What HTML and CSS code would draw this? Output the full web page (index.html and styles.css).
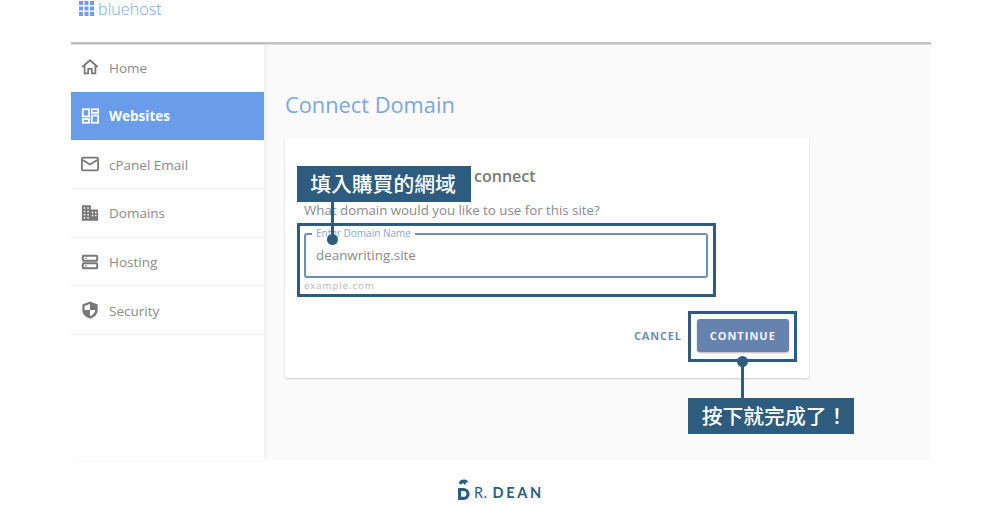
FILE: index.html
```html
<!DOCTYPE html>
<html lang="zh-Hant">
<head>
<meta charset="utf-8">
<title>Connect Domain</title>
<link rel="stylesheet" href="styles.css">
</head>
<body>
<div class="frame">
  <header class="topbar">
    <svg class="logo-grid" width="15" height="15" viewBox="0 0 15 15"><g fill="#6a9fe8"><rect x="0" y="0" width="4" height="4"/><rect x="5.500" y="0" width="4" height="4"/><rect x="11" y="0" width="4" height="4"/><rect x="0" y="5.500" width="4" height="4"/><rect x="5.500" y="5.500" width="4" height="4"/><rect x="11" y="5.500" width="4" height="4"/><rect x="0" y="11" width="4" height="4"/><rect x="5.500" y="11" width="4" height="4"/><rect x="11" y="11" width="4" height="4"/></g></svg>
    <span class="logo-text">bluehost</span>
  </header>
  <div class="shell">
    <nav class="sidebar">
      <div class="nav-item">
        <svg class="nav-icon" viewBox="0 0 20 20" fill="none" stroke="#777" stroke-width="1.900"><path d="M1.500 10 10 2.500l8.500 7.500M4 8.500V17h4v-5h4v5h4V8.500"/></svg>
        <span>Home</span>
      </div>
      <div class="nav-item active">
        <svg class="nav-icon" viewBox="0 0 20 20" fill="none" stroke="#fff" stroke-width="2"><rect x="2" y="2.500" width="7" height="8"/><rect x="12" y="2.500" width="7" height="4"/><rect x="2" y="13.500" width="7" height="4"/><rect x="12" y="9.500" width="7" height="8"/></svg>
        <span>Websites</span>
      </div>
      <div class="nav-item">
        <svg class="nav-icon" viewBox="0 0 20 20" fill="none" stroke="#777" stroke-width="2"><rect x="1" y="3" width="18" height="14" rx="1.500"/><path d="m2 5.500 8 5 8-5"/></svg>
        <span>cPanel Email</span>
      </div>
      <div class="nav-item">
        <svg class="nav-icon" viewBox="0 0 20 20"><path fill="#777" d="M1 1.500h10V6h8v12.500H1z"/><path fill="#fff" d="M3 3.500h1.700v1.700H3zM7 3.500h1.700v1.700H7zM3 7.500h1.700v1.700H3zM7 7.500h1.700v1.700H7zM3 11h1.700v1.700H3zM7 11h1.700v1.700H7zM3 14.500h1.700v1.700H3zM7 14.500h1.700v1.700H7zM12 8.500h1.700v1.700H12zM15.500 8.500h1.700v1.700h-1.700zM12 12h1.700v1.700H12zM15.500 12h1.700v1.700h-1.700z"/></svg>
        <span>Domains</span>
      </div>
      <div class="nav-item">
        <svg class="nav-icon" viewBox="0 0 20 20" fill="none" stroke="#777" stroke-width="2.200"><rect x="2" y="3" width="16" height="5.500" rx="1"/><rect x="2" y="11.500" width="16" height="5.500" rx="1"/><path stroke-width="1.200" d="M4.500 5.800h2M4.500 14.300h2"/></svg>
        <span>Hosting</span>
      </div>
      <div class="nav-item">
        <svg class="nav-icon" viewBox="0 0 20 20"><path fill="#777" d="M10 .5 1.500 4V10c0 4.700 3.600 8.300 8.500 9.500 4.900-1.200 8.500-4.800 8.500-9.500V4z"/><path fill="#fff" d="M10 3.200 4 5.500V10h6zM10 10v6.800c3.100-1.100 5.400-3.600 5.900-6.800z"/></svg>
        <span>Security</span>
      </div>
    </nav>
    <main class="content">
      <h1 class="page-title">Connect Domain</h1>
      <section class="card">
        <h2 class="card-heading">connect</h2>
        <p class="card-sub">What domain would you like to use for this site?</p>
        <div class="highlight field-highlight">
          <div class="field">
            <span class="field-label">Enter Domain Name</span>
            <span class="field-value">deanwriting.site</span>
          </div>
          <div class="field-hint">example.com</div>
        </div>
        <div class="actions">
          <span class="cancel">CANCEL</span>
          <div class="highlight button-highlight"><span class="continue">CONTINUE</span></div>
        </div>
      </section>
    </main>
  </div>
  <div class="callout callout-field">填入購買的網域</div>
  <div class="stem stem-field"></div>
  <div class="dot dot-field"></div>
  <div class="stem stem-button"></div>
  <div class="dot dot-button"></div>
  <div class="callout callout-button">按下就完成了！</div>
</div>
<footer class="brand">
  <svg class="brand-mark" width="13" height="21" viewBox="0 0 13 21"><path fill="#2d5c7f" d="M1 4.500C1 1.500 4 0 7 .5c2 .4 3 1.500 3.500 3L8.500 3 7 6 5 4 3 5.500z"/><path fill="none" stroke="#2d5c7f" stroke-width="3.200" d="M1.600 10.500h4a4.400 4.400 0 0 1 0 8.800h-4z"/></svg>
  <span class="brand-text"><span class="brand-r">R.</span><span class="brand-name">DEAN</span></span>
</footer>
</body>
</html>
```
FILE: styles.css
```css
* { box-sizing: border-box; }
html, body { margin: 0; padding: 0; }
body {
  width: 1000px;
  height: 521px;
  overflow: hidden;
  background: #fff;
  font-family: "Open Sans", "Noto Sans", sans-serif;
  color: #777;
}
.frame {
  position: relative;
  width: 860px;
  height: 460px;
  margin-left: 71px;
  display: flex;
  flex-direction: column;
}
.topbar {
  height: 43px;
  flex: none;
  display: flex;
  align-items: flex-start;
  gap: 4px;
  padding: 1px 0 0 8px;
  position: relative;
  z-index: 1;
}
.topbar::after {
  content: "";
  position: absolute;
  left: 0;
  right: 0;
  top: 42px;
  height: 3px;
  background: linear-gradient(#c9c9c9, #bdbdbd 50%, #ececec);
}
.logo-grid { flex: none; }
.logo-text {
  font-size: 16.200px;
  line-height: 16px;
  color: #7ba9e8;
  font-weight: 300;
}
.shell { flex: 1; display: flex; min-height: 0; }
.sidebar {
  width: 193px;
  flex: none;
  background: #fff;
  box-shadow: 2px 0 4px rgba(0,0,0,.05);
  position: relative;
}
.nav-item {
  height: 48.700px;
  display: flex;
  align-items: center;
  gap: 10px;
  padding: 0 0 0 10px;
  font-size: 13.500px;
  color: #8a8a8a;
  border-bottom: 1px solid #eee;
}
.nav-item span { padding-top: 1px; }
.nav-item.active {
  background: #699dea;
  color: #fff;
  font-weight: 700;
  border-bottom-color: #699dea;
}
.nav-item:first-child { border-bottom: 0; }
.nav-icon { width: 18px; height: 18px; flex: none; }
.content {
  flex: 1;
  background: #fafafa;
  padding: 44px 0 0 21px;
}
.page-title {
  margin: 0;
  font-size: 21.800px;
  line-height: 36px;
  font-weight: 400;
  color: #7aa5e6;
}
.card {
  width: 524px;
  height: 240px;
  margin-top: 15px;
  padding: 26px 20px 0 19px;
  background: #fff;
  border-radius: 3px;
  box-shadow: 0 1px 2px rgba(0,0,0,.2);
}
.card-heading {
  margin: 0 0 0 170px;
  font-size: 16px;
  line-height: 24px;
  font-weight: 600;
  color: #7a7a7a;
}
.card-sub {
  margin: 12px 0 0;
  font-size: 13.300px;
  line-height: 20px;
  color: #8a8a8a;
}
.highlight {
  border: 3px solid #2d5c7f;
}
.field-highlight {
  position: absolute;
  left: 226px;
  top: 223px;
  width: 419px;
  height: 74px;
  padding: 7px 5px 0 4px;
}
.field {
  position: relative;
  height: 45px;
  padding: 0 10px 2px;
  border: 2px solid #6f8db8;
  border-radius: 3px;
  display: flex;
  align-items: center;
}
.field-label {
  position: absolute;
  left: 6px;
  top: -8px;
  padding: 0 4px;
  background: #fff;
  font-size: 10px;
  line-height: 12px;
  color: #8ba4c8;
}
.field-value { font-size: 13.400px; color: #8a8a8a; }
.field-hint {
  margin: 2px 0 0;
  font-size: 9.500px;
  letter-spacing: 1px;
  line-height: 12px;
  color: #b5b5b5;
}
.actions {
  position: absolute;
  left: 563px;
  top: 311px;
  display: flex;
  align-items: center;
  gap: 6px;
}
.cancel {
  margin-bottom: 2px;
  font-size: 11px;
  font-weight: 700;
  letter-spacing: 0.800px;
  color: #6f8db0;
}
.button-highlight {
  width: 109px;
  height: 51px;
  padding: 5px 5px 5px 6px;
  background: #fff;
}
.continue {
  display: flex;
  align-items: center;
  justify-content: center;
  height: 33px;
  background: #6683b0;
  border-radius: 3px;
  box-shadow: 0 1px 2px rgba(0,0,0,.3);
  font-size: 11px;
  font-weight: 700;
  letter-spacing: 1px;
  color: #f2f5fa;
}
.callout {
  position: absolute;
  height: 36px;
  padding-bottom: 2px;
  display: flex;
  align-items: center;
  justify-content: center;
  background: #2d5c7f;
  color: #fff;
  font-family: "Noto Sans CJK TC", "Noto Sans", sans-serif;
  font-size: 20.800px;
  font-weight: 500;
}
.callout-field { left: 226px; top: 166px; width: 174px; padding-right: 2px; }
.callout-button { left: 617px; top: 398px; width: 166px; padding-left: 7px; }
.stem { position: absolute; width: 3px; background: #2d5c7f; }
.stem-field { left: 260px; top: 200px; height: 38px; }
.stem-button { left: 670px; top: 362px; height: 38px; }
.dot {
  position: absolute;
  width: 11px;
  height: 11px;
  border-radius: 50%;
  background: #2d5c7f;
}
.dot-field { left: 256px; top: 234px; }
.dot-button { left: 666px; top: 356px; }
.brand {
  position: absolute;
  left: 458px;
  top: 479px;
  display: flex;
  align-items: flex-end;
  gap: 3px;
  color: #2d5c7f;
}
.brand-text {
  display: flex;
  align-items: baseline;
  gap: 5px;
  margin-bottom: -1px;
  font-family: "Lato", "Open Sans", sans-serif;
  font-size: 14.500px;
  line-height: 16px;
  white-space: nowrap;
}
.brand-r { font-weight: 400; letter-spacing: 0.500px; }
.brand-name { font-weight: 700; letter-spacing: 2.700px; }
```
